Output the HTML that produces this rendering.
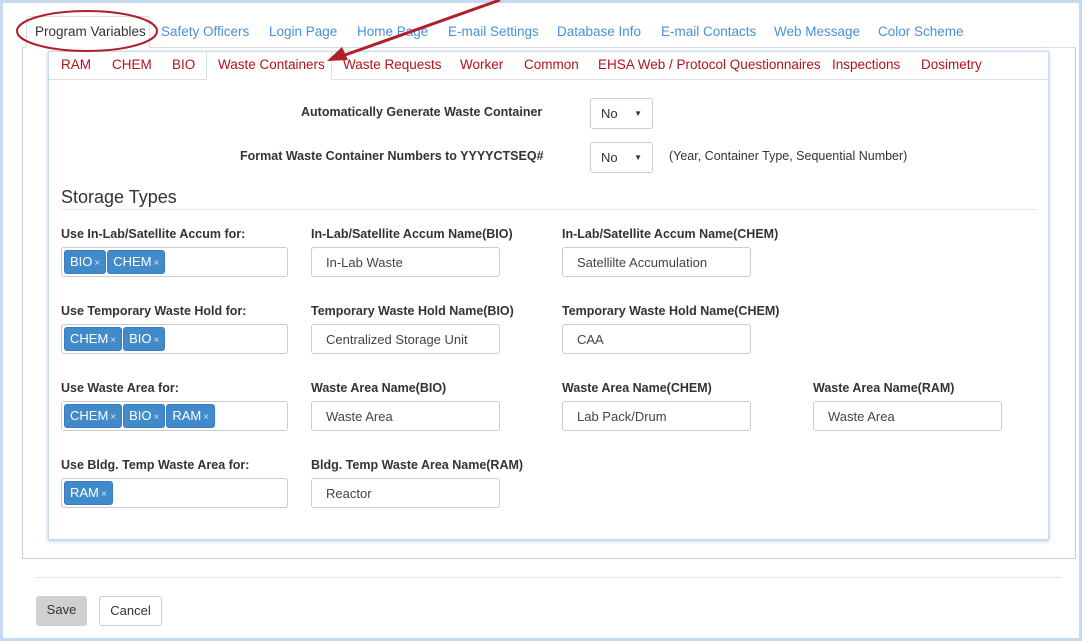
<!DOCTYPE html>
<html><head><style>
*{box-sizing:border-box;margin:0;padding:0}
body{width:1082px;height:641px;background:#fff;font-family:"Liberation Sans",Arial,sans-serif;font-size:13px;color:#333;position:relative;overflow:hidden}
.frame{position:absolute;inset:0;border:3px solid #c6d9f0;border-top-width:3px}
.a{position:absolute;white-space:nowrap}
.t1{color:#4a90d9;font-size:13.5px;top:24px}
.t2{color:#b3131b;font-size:13.5px;top:57px}
.lbl{font-weight:bold;font-size:12.5px;color:#333}
.inp{position:absolute;border:1px solid #ccc;border-radius:3px;height:30px;padding:7px 14px;font-size:13px;color:#444;background:#fff}
.tags{position:absolute;border:1px solid #ccc;border-radius:3px;height:30px;width:227px;padding:2px;background:#fff}
.tag{display:inline-block;background:#428bca;color:#fff;border:1px solid #3a7bbf;border-radius:3px;height:24px;line-height:22px;padding:0 5px;margin-right:1px;font-size:13px}
.tag span{font-size:10px;color:#dde;margin-left:2px}
.sel{position:absolute;border:1px solid #ccc;border-radius:3px;width:63px;height:31px;padding:7px 10px;font-size:13px}
.sel:after{content:"▼";position:absolute;right:10px;top:10px;font-size:8px;color:#333}
</style></head><body>
<div class="frame"></div>
<!-- outer tabs panel -->
<div class="a" style="left:22px;top:47px;width:1054px;height:512px;border:1px solid #ccc;border-top:1px solid #ddd"></div>
<div class="a" style="left:26px;top:16px;width:124px;height:32px;border:1px solid #ddd;border-bottom:1px solid #fff;background:#fff;border-radius:3px 3px 0 0"></div>
<div class="a" style="left:35px;top:24px;font-size:13.5px;color:#333">Program Variables</div>
<div class="a t1" style="left:161px">Safety Officers</div>
<div class="a t1" style="left:269px">Login Page</div>
<div class="a t1" style="left:357px">Home Page</div>
<div class="a t1" style="left:448px">E-mail Settings</div>
<div class="a t1" style="left:557px">Database Info</div>
<div class="a t1" style="left:661px">E-mail Contacts</div>
<div class="a t1" style="left:774px">Web Message</div>
<div class="a t1" style="left:878px">Color Scheme</div>
<!-- inner panel -->
<div class="a" style="left:48px;top:51px;width:1001px;height:489px;border:1px solid #c9d9ea;box-shadow:0 1px 4px #a9c8ea"></div>
<div class="a" style="left:49px;top:79px;width:999px;height:1px;background:#ddd"></div>
<div class="a" style="left:206px;top:51px;width:126px;height:29px;border:1px solid #ddd;border-bottom:1px solid #fff;background:#fff"></div>
<div class="a t2" style="left:61px">RAM</div>
<div class="a t2" style="left:112px">CHEM</div>
<div class="a t2" style="left:172px">BIO</div>
<div class="a t2" style="left:218px">Waste Containers</div>
<div class="a t2" style="left:343px">Waste Requests</div>
<div class="a t2" style="left:460px">Worker</div>
<div class="a t2" style="left:524px">Common</div>
<div class="a t2" style="left:598px">EHSA Web / Protocol Questionnaires</div>
<div class="a t2" style="left:832px">Inspections</div>
<div class="a t2" style="left:921px">Dosimetry</div>
<!-- top fields -->
<div class="a lbl" style="left:301px;top:105px">Automatically Generate Waste Container</div>
<div class="sel" style="left:590px;top:98px">No</div>
<div class="a lbl" style="left:240px;top:149px">Format Waste Container Numbers to YYYYCTSEQ#</div>
<div class="sel" style="left:590px;top:142px">No</div>
<div class="a" style="left:669px;top:149px;font-size:12.5px">(Year, Container Type, Sequential Number)</div>
<div class="a" style="left:61px;top:187px;font-size:18px;color:#333">Storage Types</div>
<div class="a" style="left:61px;top:209px;width:975px;height:1px;background:#e5e5e5"></div>
<!-- rows -->
<div class="a lbl" style="left:61px;top:227px">Use In-Lab/Satellite Accum for:</div>
<div class="tags" style="left:61px;top:247px"><span class="tag">BIO<span>×</span></span><span class="tag">CHEM<span>×</span></span></div>
<div class="a lbl" style="left:311px;top:227px">In-Lab/Satellite Accum Name(BIO)</div>
<div class="inp" style="left:311px;top:247px;width:189px">In-Lab Waste</div>
<div class="a lbl" style="left:562px;top:227px">In-Lab/Satellite Accum Name(CHEM)</div>
<div class="inp" style="left:562px;top:247px;width:189px">Satellilte Accumulation</div>

<div class="a lbl" style="left:61px;top:304px">Use Temporary Waste Hold for:</div>
<div class="tags" style="left:61px;top:324px"><span class="tag">CHEM<span>×</span></span><span class="tag">BIO<span>×</span></span></div>
<div class="a lbl" style="left:311px;top:304px">Temporary Waste Hold Name(BIO)</div>
<div class="inp" style="left:311px;top:324px;width:189px">Centralized Storage Unit</div>
<div class="a lbl" style="left:562px;top:304px">Temporary Waste Hold Name(CHEM)</div>
<div class="inp" style="left:562px;top:324px;width:189px">CAA</div>

<div class="a lbl" style="left:61px;top:381px">Use Waste Area for:</div>
<div class="tags" style="left:61px;top:401px"><span class="tag">CHEM<span>×</span></span><span class="tag">BIO<span>×</span></span><span class="tag">RAM<span>×</span></span></div>
<div class="a lbl" style="left:311px;top:381px">Waste Area Name(BIO)</div>
<div class="inp" style="left:311px;top:401px;width:189px">Waste Area</div>
<div class="a lbl" style="left:562px;top:381px">Waste Area Name(CHEM)</div>
<div class="inp" style="left:562px;top:401px;width:189px">Lab Pack/Drum</div>
<div class="a lbl" style="left:813px;top:381px">Waste Area Name(RAM)</div>
<div class="inp" style="left:813px;top:401px;width:189px">Waste Area</div>

<div class="a lbl" style="left:61px;top:458px">Use Bldg. Temp Waste Area for:</div>
<div class="tags" style="left:61px;top:478px"><span class="tag">RAM<span>×</span></span></div>
<div class="a lbl" style="left:311px;top:458px">Bldg. Temp Waste Area Name(RAM)</div>
<div class="inp" style="left:311px;top:478px;width:189px">Reactor</div>
<!-- footer -->
<div class="a" style="left:35px;top:577px;width:1027px;height:1px;background:#e5e5e5"></div>
<div class="a" style="left:36px;top:596px;width:51px;height:30px;background:#d0d0d0;border-radius:3px;text-align:center;line-height:28px;color:#333">Save</div>
<div class="a" style="left:99px;top:596px;width:63px;height:30px;border:1px solid #ccc;border-radius:3px;text-align:center;line-height:28px;color:#333">Cancel</div>
<!-- annotations -->
<svg class="a" style="left:0;top:0" width="1082" height="641">
<ellipse cx="87" cy="31" rx="70" ry="20" fill="none" stroke="#b0202a" stroke-width="2"/>
<line x1="500" y1="0" x2="345" y2="55" stroke="#b0202a" stroke-width="3"/>
<polygon points="327,61 342,47 348,60" fill="#b0202a"/>
</svg>
</body></html>
